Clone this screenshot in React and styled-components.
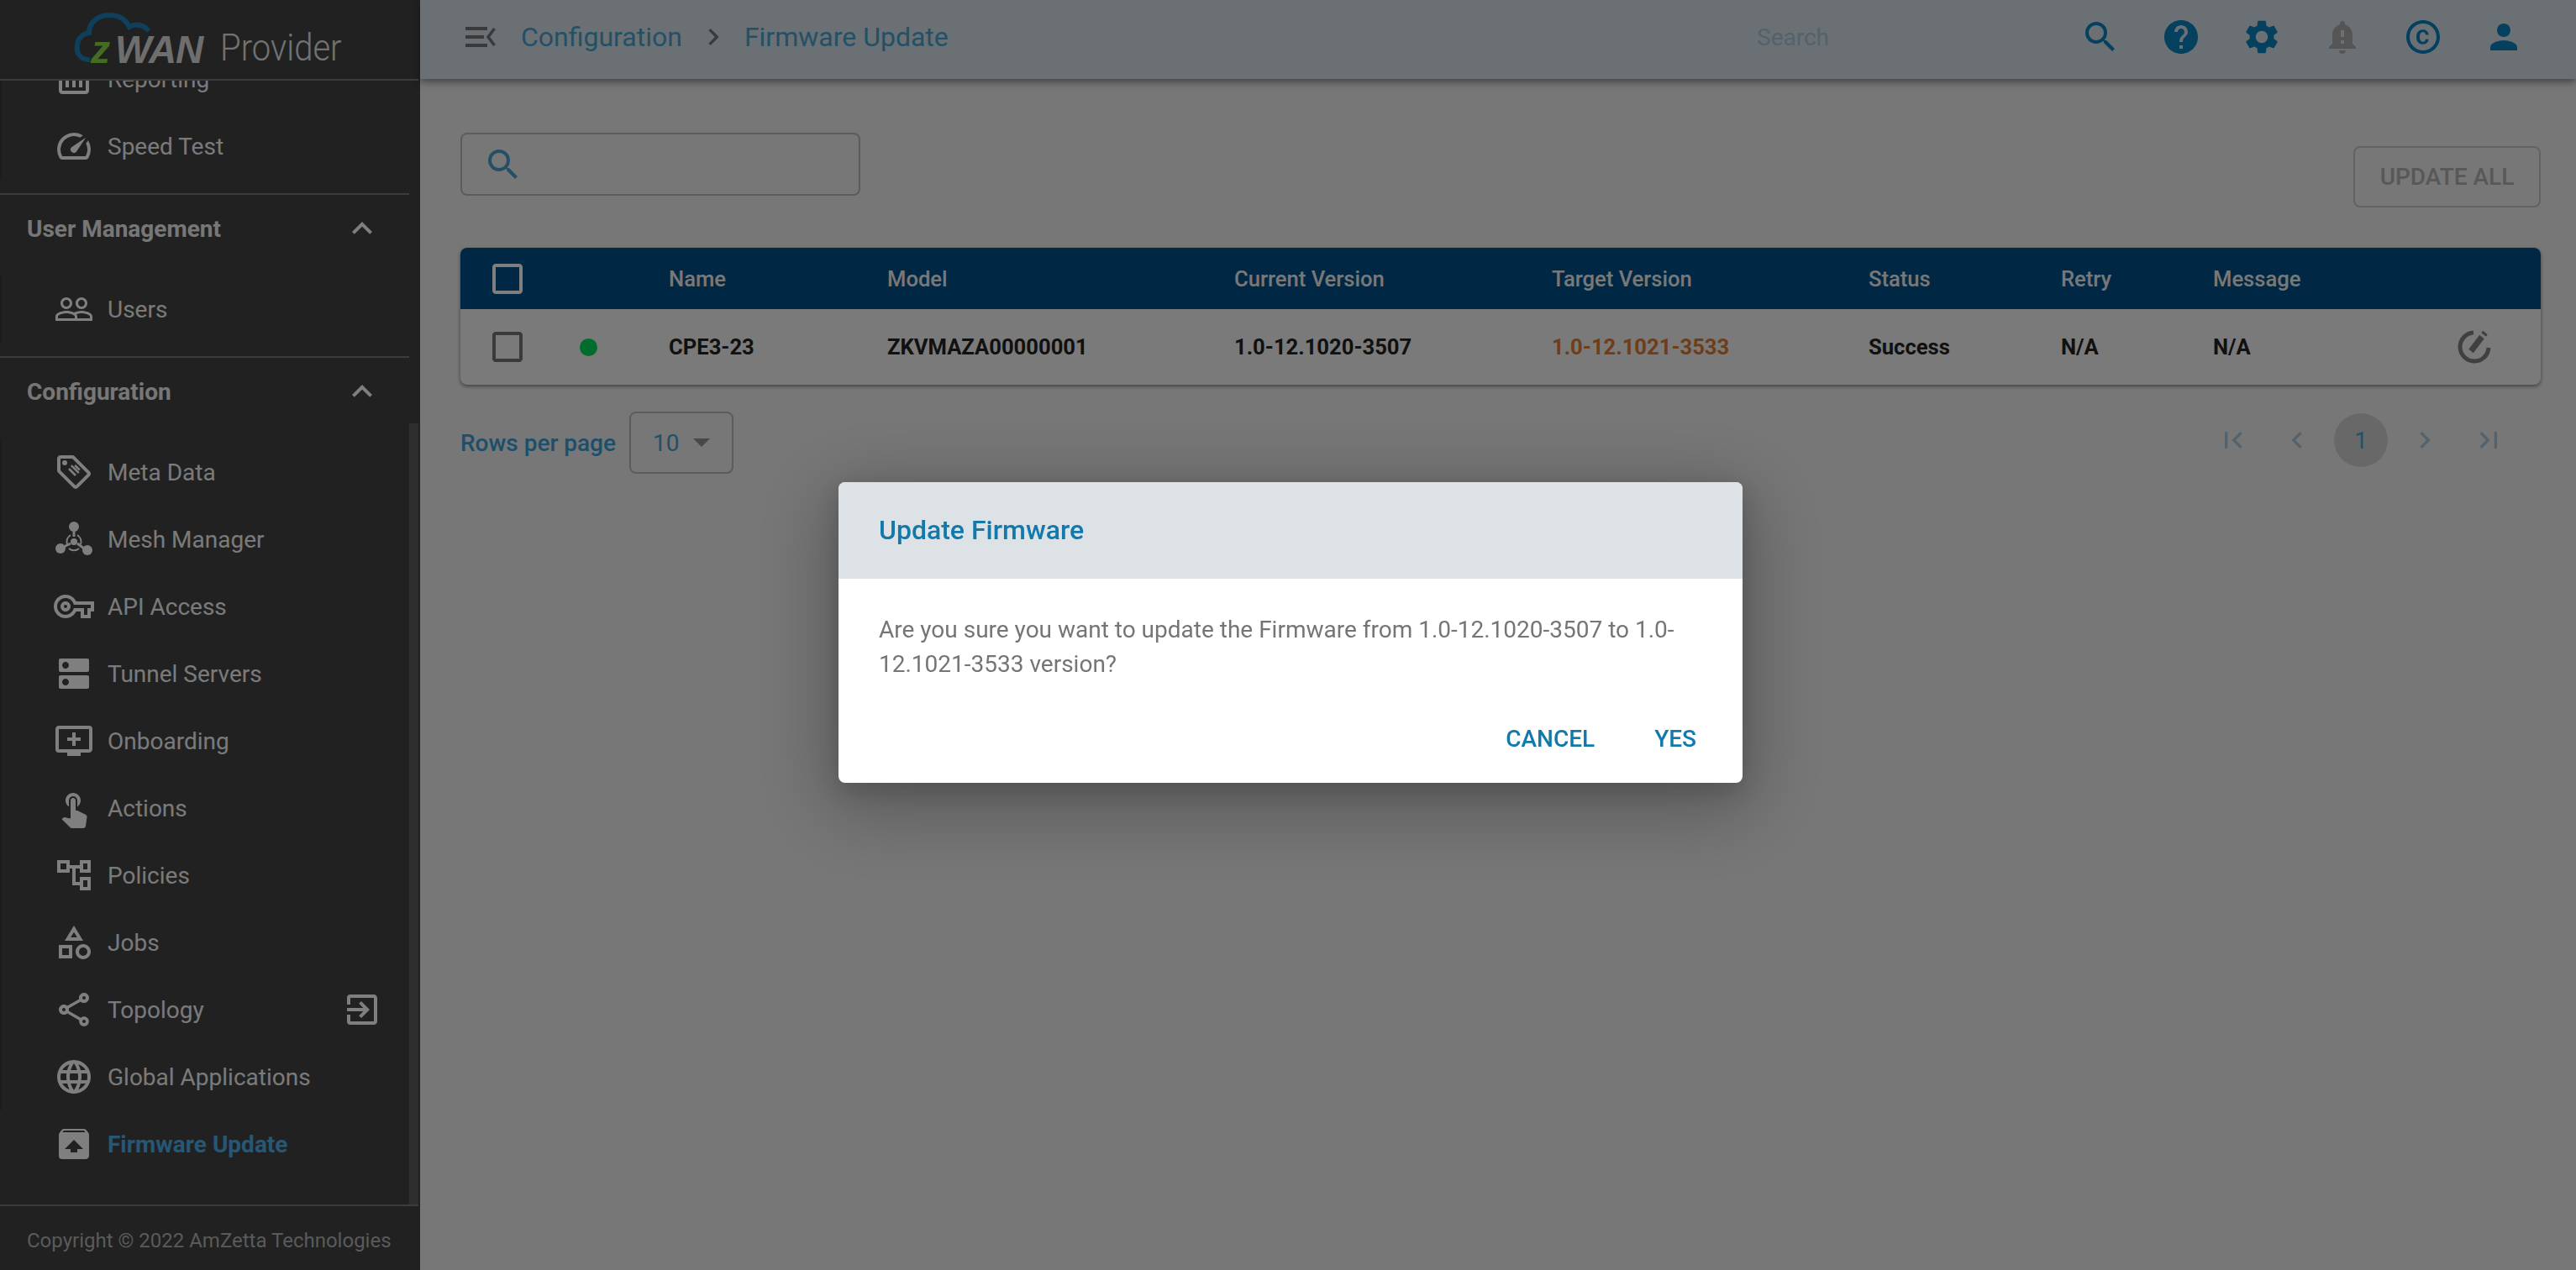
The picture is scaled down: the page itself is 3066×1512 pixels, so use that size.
import styled, { createGlobalStyle } from "styled-components";
import {
  MdOutlineAssessment, MdOutlineSpeed, MdPeopleOutline, MdExpandLess, MdOutlineVpnKey, MdDns,
  MdOutlineAddToQueue, MdTouchApp, MdOutlineCategory, MdOutlineShare, MdLanguage, MdUnarchive,
  MdOutlineExitToApp, MdChevronRight, MdSearch, MdHelp, MdSettings, MdNotificationImportant,
  MdOutlineCopyright, MdPerson, MdCheckBoxOutlineBlank, MdFirstPage, MdLastPage,
  MdNavigateBefore, MdNavigateNext,
} from "react-icons/md";

const GlobalStyle = createGlobalStyle`
html, body {
  margin: 0;
  padding: 0;
  background: #eeeeee;
  font-family: Roboto, "Liberation Sans", sans-serif;
}
* { box-sizing: border-box; }
`;

const Page = styled.div`
display: flex;
width: 100vw;
height: 100vh;
overflow: hidden;
`;

const Sidebar = styled.aside`
flex: none;
width: 500px;
height: 100%;
display: flex;
flex-direction: column;
background: #424242;
border-right: 2px solid #424242;
`;

const Brand = styled.div`
flex: none;
height: 96px;
border-bottom: 2px solid #787878;
position: relative;
display: flex;
align-items: flex-end;
padding: 0 0 10px 108px;
`;

const CloudArc = styled.svg`
position: absolute;
left: 0;
top: 0;
`;

const BrandZ = styled.span`
font: italic 700 46px/50px "Liberation Sans", sans-serif;
color: #8cd848;
width: 29px;
`;

const BrandWan = styled.span`
font: italic 700 46px/50px "Liberation Sans", sans-serif;
letter-spacing: -1px;
color: #dcdcdc;
width: 125px;
`;

const BrandName = styled.span`
font: 300 44px/50px Roboto, sans-serif;
color: #e4e4e4;
transform: scaleX(0.91);
transform-origin: left center;
margin-bottom: 2px;
`;

const Scroller = styled.nav`
flex: 1;
min-height: 0;
overflow: hidden;
position: relative;
padding-right: 11px;
`;

const ScrollThumb = styled.div`
position: absolute;
right: 0;
top: 408px;
bottom: 0;
width: 11px;
background: #5c5c5c;
`;

const Group = styled.section`
padding-bottom: 16px;
margin-top: ${(p) => (p.$clipped ? "-42px" : "0")};
border-bottom: ${(p) => (p.$last ? "none" : "2px solid #787878")};
`;

const GroupHead = styled.div`
height: 80px;
margin-bottom: 16px;
padding: 0 32px;
display: flex;
align-items: center;
justify-content: space-between;
font-size: 28px;
font-weight: 700;
color: #eeeeee;
svg { color: #ffffff; }
`;

const Item = styled.div`
height: 80px;
display: flex;
align-items: center;
gap: 16px;
padding: 0 32px 0 62px;
border-left: 2px solid ${(p) => (p.$active ? "transparent" : "#383838")};
font-size: 28px;
font-weight: ${(p) => (p.$active ? 700 : 400)};
color: ${(p) => (p.$active ? "#4caee8" : "#f5f5f5")};
`;

const ItemIcon = styled.span`
flex: none;
width: 48px;
height: 48px;
display: flex;
align-items: center;
justify-content: center;
color: #ffffff;
`;

const ItemTail = styled.span`
margin-left: auto;
display: flex;
color: #ffffff;
`;

const SideFooter = styled.footer`
flex: none;
height: 78px;
border-top: 2px solid #787878;
padding: 6px 0 0 32px;
display: flex;
align-items: center;
font-size: 24px;
color: #b4b4b4;
`;

const Main = styled.main`
flex: 1;
min-width: 0;
display: flex;
flex-direction: column;
`;

const TopBar = styled.header`
flex: none;
height: 94px;
display: flex;
align-items: center;
padding: 0 38px 6px 54px;
background: #d6e0e8;
box-shadow: 0 4px 8px rgba(0, 0, 0, 0.4);
`;

const MenuGlyph = styled.svg`
flex: none;
margin-right: 30px;
color: #747474;
`;

const Crumb = styled.span`
font-size: 32px;
color: #48a0cc;
`;

const CrumbSep = styled.span`
display: flex;
margin: 0 17px;
color: #747474;
`;

const TopSearch = styled.input`
width: 361px;
margin-left: auto;
border: none;
outline: none;
background: transparent;
padding: 0;
font: 28px Roboto, sans-serif;
&::placeholder { color: #a6c4d8; opacity: 1; }
`;

const TopIcons = styled.div`
display: flex;
`;

const TopIcon = styled.span`
width: 96px;
display: flex;
justify-content: center;
color: ${(p) => (p.$muted ? "#aaaaaa" : "#0a80bd")};
`;

const Content = styled.div`
flex: 1;
padding: 64px 42px 0 48px;
`;

const Toolbar = styled.div`
display: flex;
justify-content: space-between;
align-items: flex-start;
margin-bottom: 48px;
`;

const SearchBox = styled.div`
width: 476px;
height: 75px;
display: flex;
align-items: center;
padding-left: 25px;
border: 2px solid #b8b8b8;
border-radius: 8px;
color: #48a0cc;
`;

const UpdateAll = styled.button`
width: 223px;
height: 73px;
margin-top: 16px;
background: transparent;
border: 2px solid #c4c4c4;
border-radius: 8px;
font: 500 28px Roboto, sans-serif;
color: #b0b0b0;
`;

const Card = styled.div`
border-radius: 8px;
background: #f5f5f5;
box-shadow: 0 2px 4px rgba(0, 0, 0, 0.45);
`;

const TableRow = styled.div`
display: grid;
grid-template-columns: 120px 128px 260px 413px 378px 377px 229px 181px 1fr 128px;
align-items: center;
font-size: 25.6px;
height: ${(p) => (p.$head ? "73px" : "90px")};
background: ${(p) => (p.$head ? "#00508a" : "transparent")};
border-radius: ${(p) => (p.$head ? "8px 8px 0 0" : "0 0 8px 8px")};
font-weight: ${(p) => (p.$head ? 500 : 700)};
color: ${(p) => (p.$head ? "#f0f0f0" : "#222222")};
`;

const CheckCell = styled.div`
padding-left: 32px;
display: flex;
color: ${(p) => (p.$head ? "#ffffff" : "#757575")};
`;

const TargetCell = styled.div`
color: #e07a2c;
`;

const StatusDot = styled.span`
display: block;
width: 21px;
height: 21px;
margin-left: 22px;
border-radius: 50%;
background: #00d85c;
`;

const ActionCell = styled.div`
padding-left: 29px;
display: flex;
color: #808080;
`;

const PagerRow = styled.div`
display: flex;
justify-content: space-between;
align-items: flex-start;
margin-top: 32px;
padding-right: 30px;
`;

const RowsPer = styled.div`
display: flex;
align-items: center;
gap: 16px;
font-size: 28px;
font-weight: 500;
color: #3a9fd6;
`;

const RowsSelect = styled.div`
width: 124px;
height: 74px;
display: flex;
align-items: center;
justify-content: space-between;
padding: 0 26px;
border: 2px solid #b8b8b8;
border-radius: 8px;
font-weight: 400;
color: #48a0cc;
`;

const SelectArrow = styled.span`
width: 0;
height: 0;
border-left: 10px solid transparent;
border-right: 10px solid transparent;
border-top: 10px solid #909090;
`;

const Pager = styled.div`
display: flex;
gap: 12px;
margin-top: 2px;
`;

const PageBtn = styled.span`
width: 64px;
height: 64px;
display: flex;
align-items: center;
justify-content: center;
border-radius: 50%;
font-size: 28px;
color: ${(p) => (p.$current ? "#48a0cc" : "#a6c4d8")};
background: ${(p) => (p.$current ? "rgba(0, 0, 0, 0.12)" : "transparent")};
`;

const Backdrop = styled.div`
position: fixed;
inset: 0;
padding: 0 0 6px 6px;
display: flex;
align-items: center;
justify-content: center;
background: rgba(0, 0, 0, 0.5);
`;

const Dialog = styled.div`
width: 1076px;
height: 358px;
border-radius: 8px;
overflow: hidden;
background: #ffffff;
box-shadow: 0 22px 90px 14px rgba(0, 0, 0, 0.24), 0 10px 30px 4px rgba(0, 0, 0, 0.14);
display: flex;
flex-direction: column;
`;

const DialogHead = styled.div`
flex: none;
height: 115px;
display: flex;
align-items: center;
padding: 0 48px 2px;
background: #dde2e6;
font-size: 32px;
font-weight: 500;
color: #1179ac;
`;

const DialogBody = styled.p`
margin: 0;
padding: 40px 48px 0;
font-size: 28px;
line-height: 41px;
color: #757575;
`;

const DialogActions = styled.div`
margin-top: auto;
display: flex;
justify-content: flex-end;
gap: 71px;
padding: 0 55px 36px 0;
font-size: 28px;
font-weight: 500;
color: #1179ac;
`;

// icons not in the material set
const MetaIcon = () => (
  <svg width="48" height="48" viewBox="0 0 24 24" fill="currentColor">
    <path d="M21.41 11.58l-9-9C12.05 2.22 11.55 2 11 2H4c-1.1 0-2 .9-2 2v7c0 .55.22 1.05.59 1.42l9 9c.36.36.86.58 1.41.58s1.05-.22 1.41-.59l7-7c.37-.36.59-.86.59-1.41s-.23-1.06-.59-1.42zM13 20.01L4 11V4h7v-.01l9 9-7 7.02z" />
    <circle cx="6.5" cy="6.5" r="1.5" />
    <path d="M9 10l4 4M10.4 8.1l4.5 4.5M12.6 8l2.8 2.8" stroke="currentColor" strokeWidth="1.3" fill="none" />
  </svg>
);

const MeshIcon = () => (
  <svg width="44" height="42" viewBox="0 0 44 42" fill="currentColor" stroke="none">
    <circle cx="22" cy="6" r="6" />
    <circle cx="6" cy="32" r="6" />
    <circle cx="38" cy="34" r="6" />
    <circle cx="22" cy="24" r="4" />
    <path d="M22 8v10M10 30l8-4M34 32l-8-6" stroke="currentColor" strokeWidth="3" />
    <path d="M14 27a9 9 0 0 1 4-11M26 16a9 9 0 0 1 4 11M16 32a9 9 0 0 0 12 0" stroke="currentColor" strokeWidth="2" fill="none" />
  </svg>
);

const PolicyIcon = () => (
  <svg width="40" height="36" viewBox="0 0 40 36" fill="none" stroke="currentColor" strokeWidth="4">
    <rect x="2" y="2" width="11" height="11" />
    <rect x="29" y="2" width="9" height="11" />
    <rect x="29" y="22" width="9" height="12" />
    <path d="M13 8h16M20 8v20h9" />
  </svg>
);

const EditIcon = () => (
  <svg width="40" height="40" viewBox="0 0 40 40" fill="none" stroke="currentColor">
    <path d="M19 3A17 17 0 1 0 37 21" strokeWidth="5" />
    <path d="M16 25L29 8" strokeWidth="7" />
    <path d="M31 5.5l2-2.5" strokeWidth="7" />
  </svg>
);

const firstItems = [
  { label: "Reporting", icon: <MdOutlineAssessment size={48} /> },
  { label: "Speed Test", icon: <MdOutlineSpeed size={48} /> },
];

const configItems = [
  { label: "Meta Data", icon: <MetaIcon /> },
  { label: "Mesh Manager", icon: <MeshIcon /> },
  { label: "API Access", icon: <MdOutlineVpnKey size={52} /> },
  { label: "Tunnel Servers", icon: <MdDns size={48} /> },
  { label: "Onboarding", icon: <MdOutlineAddToQueue size={48} /> },
  { label: "Actions", icon: <MdTouchApp size={48} /> },
  { label: "Policies", icon: <PolicyIcon /> },
  { label: "Jobs", icon: <MdOutlineCategory size={48} /> },
  { label: "Topology", icon: <MdOutlineShare size={48} />, tail: <MdOutlineExitToApp size={48} /> },
  { label: "Global Applications", icon: <MdLanguage size={48} /> },
  { label: "Firmware Update", icon: <MdUnarchive size={48} />, active: true },
];

const NavItem = ({ item }) => (
  <Item $active={item.active}>
    <ItemIcon>{item.icon}</ItemIcon>
    {item.label}
    {item.tail && <ItemTail>{item.tail}</ItemTail>}
  </Item>
);

function App() {
  return (
    <>
      <GlobalStyle />
      <Page>
        <Sidebar>
          <Brand>
            <CloudArc width="200" height="80" fill="none" stroke="#1f7fb5" strokeWidth="6">
              <path d="M107 71C95 72 90 61 92 53C93 45 99 40 106 39C106 26 118 18 130 18C142 18 150 24 154 32C162 27 172 30 177 37" />
            </CloudArc>
            <BrandZ>z</BrandZ>
            <BrandWan>WAN</BrandWan>
            <BrandName>Provider</BrandName>
          </Brand>
          <Scroller>
            <ScrollThumb />
            <Group $clipped>
              {firstItems.map((item) => <NavItem key={item.label} item={item} />)}
            </Group>
            <Group>
              <GroupHead>User Management <MdExpandLess size={48} /></GroupHead>
              <NavItem item={{ label: "Users", icon: <MdPeopleOutline size={48} /> }} />
            </Group>
            <Group $last>
              <GroupHead>Configuration <MdExpandLess size={48} /></GroupHead>
              {configItems.map((item) => <NavItem key={item.label} item={item} />)}
            </Group>
          </Scroller>
          <SideFooter>Copyright © 2022 AmZetta Technologies</SideFooter>
        </Sidebar>

        <Main>
          <TopBar>
            <MenuGlyph width="36" height="24" viewBox="0 0 36 24" fill="currentColor">
              <rect width="26" height="4" />
              <rect y="10" width="22" height="4" />
              <rect y="20" width="26" height="4" />
              <path d="M34.5 2L27 12l7.5 10" fill="none" stroke="currentColor" strokeWidth="3.6" />
            </MenuGlyph>
            <Crumb>Configuration</Crumb>
            <CrumbSep><MdChevronRight size={40} /></CrumbSep>
            <Crumb>Firmware Update</Crumb>
            <TopSearch placeholder="Search" />
            <TopIcons>
              <TopIcon><MdSearch size={48} /></TopIcon>
              <TopIcon><MdHelp size={48} /></TopIcon>
              <TopIcon><MdSettings size={48} /></TopIcon>
              <TopIcon $muted><MdNotificationImportant size={48} /></TopIcon>
              <TopIcon><MdOutlineCopyright size={48} /></TopIcon>
              <TopIcon><MdPerson size={48} /></TopIcon>
            </TopIcons>
          </TopBar>

          <Content>
            <Toolbar>
              <SearchBox><MdSearch size={48} /></SearchBox>
              <UpdateAll>UPDATE ALL</UpdateAll>
            </Toolbar>

            <Card>
              <TableRow $head>
                <CheckCell $head><MdCheckBoxOutlineBlank size={48} /></CheckCell>
                <div />
                <div>Name</div>
                <div>Model</div>
                <div>Current Version</div>
                <div>Target Version</div>
                <div>Status</div>
                <div>Retry</div>
                <div>Message</div>
                <div />
              </TableRow>
              <TableRow>
                <CheckCell><MdCheckBoxOutlineBlank size={48} /></CheckCell>
                <StatusDot />
                <div>CPE3-23</div>
                <div>ZKVMAZA00000001</div>
                <div>1.0-12.1020-3507</div>
                <TargetCell>1.0-12.1021-3533</TargetCell>
                <div>Success</div>
                <div>N/A</div>
                <div>N/A</div>
                <ActionCell><EditIcon /></ActionCell>
              </TableRow>
            </Card>

            <PagerRow>
              <RowsPer>
                Rows per page
                <RowsSelect>10 <SelectArrow /></RowsSelect>
              </RowsPer>
              <Pager>
                <PageBtn><MdFirstPage size={40} /></PageBtn>
                <PageBtn><MdNavigateBefore size={40} /></PageBtn>
                <PageBtn $current>1</PageBtn>
                <PageBtn><MdNavigateNext size={40} /></PageBtn>
                <PageBtn><MdLastPage size={40} /></PageBtn>
              </Pager>
            </PagerRow>
          </Content>
        </Main>
      </Page>

      <Backdrop>
        <Dialog>
          <DialogHead>Update Firmware</DialogHead>
          <DialogBody>
            Are you sure you want to update the Firmware from 1.0-12.1020-3507 to 1.0-12.1021-3533 version?
          </DialogBody>
          <DialogActions>
            <span>CANCEL</span>
            <span>YES</span>
          </DialogActions>
        </Dialog>
      </Backdrop>
    </>
  );
}

export default App;
